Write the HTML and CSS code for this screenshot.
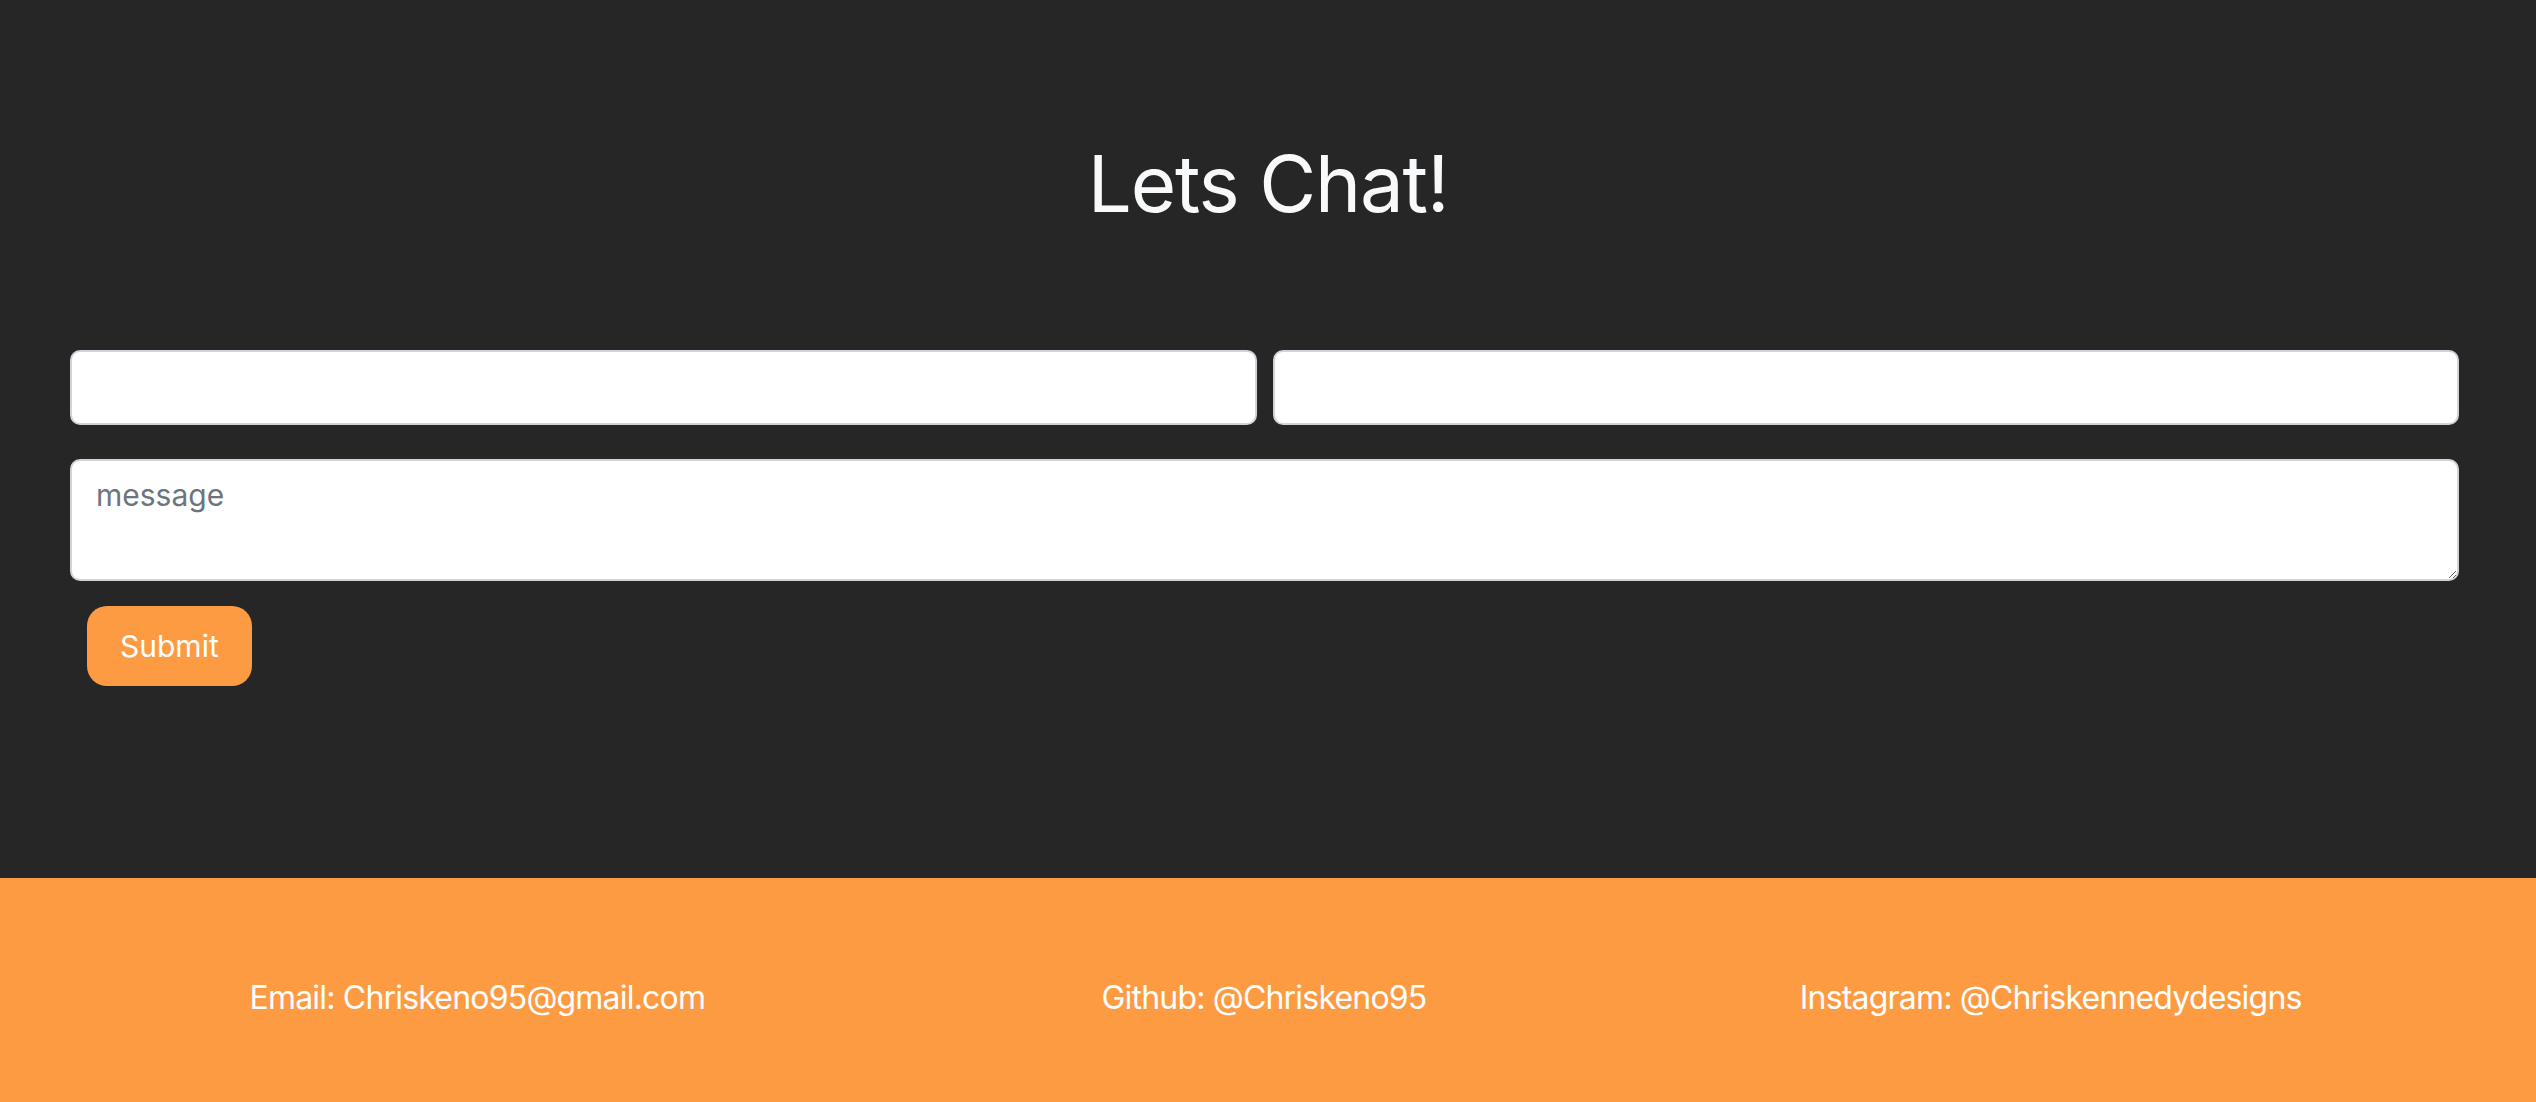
FILE: index.html
```html
<!DOCTYPE html>
<html lang="en">
<head>
<meta charset="utf-8">
<title>Lets Chat!</title>
<link rel="stylesheet" href="styles.css">
</head>
<body>
<section class="contact">
  <h1 class="contact-title">Lets Chat!</h1>
  <form class="contact-form">
    <div class="form-row">
      <input class="field" type="text" aria-label="name">
      <input class="field" type="email" aria-label="email">
    </div>
    <textarea class="field field-message" placeholder="message"></textarea>
    <button class="submit-btn" type="button">Submit</button>
  </form>
</section>
<footer class="footer">
  <div class="footer-item">Email: Chriskeno95@gmail.com</div>
  <div class="footer-item">Github: @Chriskeno95</div>
  <div class="footer-item">Instagram: @Chriskennedydesigns</div>
</footer>
</body>
</html>
```

FILE: styles.css
```css
html, body {
  margin: 0;
  padding: 0;
}
body {
  font-family: Inter, "Noto Sans", "Liberation Sans", sans-serif;
  background: #262626;
}
.contact {
  height: 878px;
  box-sizing: border-box;
  padding-top: 137px;
  background: #262626;
}
.contact-title {
  margin: 0;
  font-size: 78px;
  font-weight: 400;
  line-height: 94px;
  letter-spacing: -1.2px;
  text-align: center;
  color: #f8f9fa;
}
.contact-form {
  margin: 119px 77px 0 70px;
  display: flex;
  flex-direction: column;
  align-items: flex-start;
}
.form-row {
  display: grid;
  grid-template-columns: 1fr 1fr;
  gap: 16px;
  width: 100%;
}
.field {
  box-sizing: border-box;
  width: 100%;
  height: 75px;
  border: 2px solid #ced4da;
  border-radius: 10px;
  background: #fff;
  font-family: inherit;
  font-size: 30px;
  line-height: 45px;
  padding: 12px 24px;
  color: #212529;
  outline: none;
}
.field-message {
  display: block;
  height: 122px;
  margin-top: 34px;
  resize: vertical;
}
.field::placeholder {
  color: #6c757d;
}
.submit-btn {
  margin: 25px 0 0 17px;
  height: 80px;
  padding: 0 33px;
  border: 0;
  border-radius: 20px;
  background: #fd9b43;
  color: #fff;
  font-family: inherit;
  font-size: 30px;
}
.footer {
  height: 224px;
  box-sizing: border-box;
  padding: 96px 92px 0 84px;
  background: #fd9b43;
  display: grid;
  grid-template-columns: 1fr 1fr 1fr;
}
.footer-item {
  text-align: center;
  font-size: 32px;
  line-height: 48px;
  letter-spacing: -0.8px;
  color: #fff;
}
```
